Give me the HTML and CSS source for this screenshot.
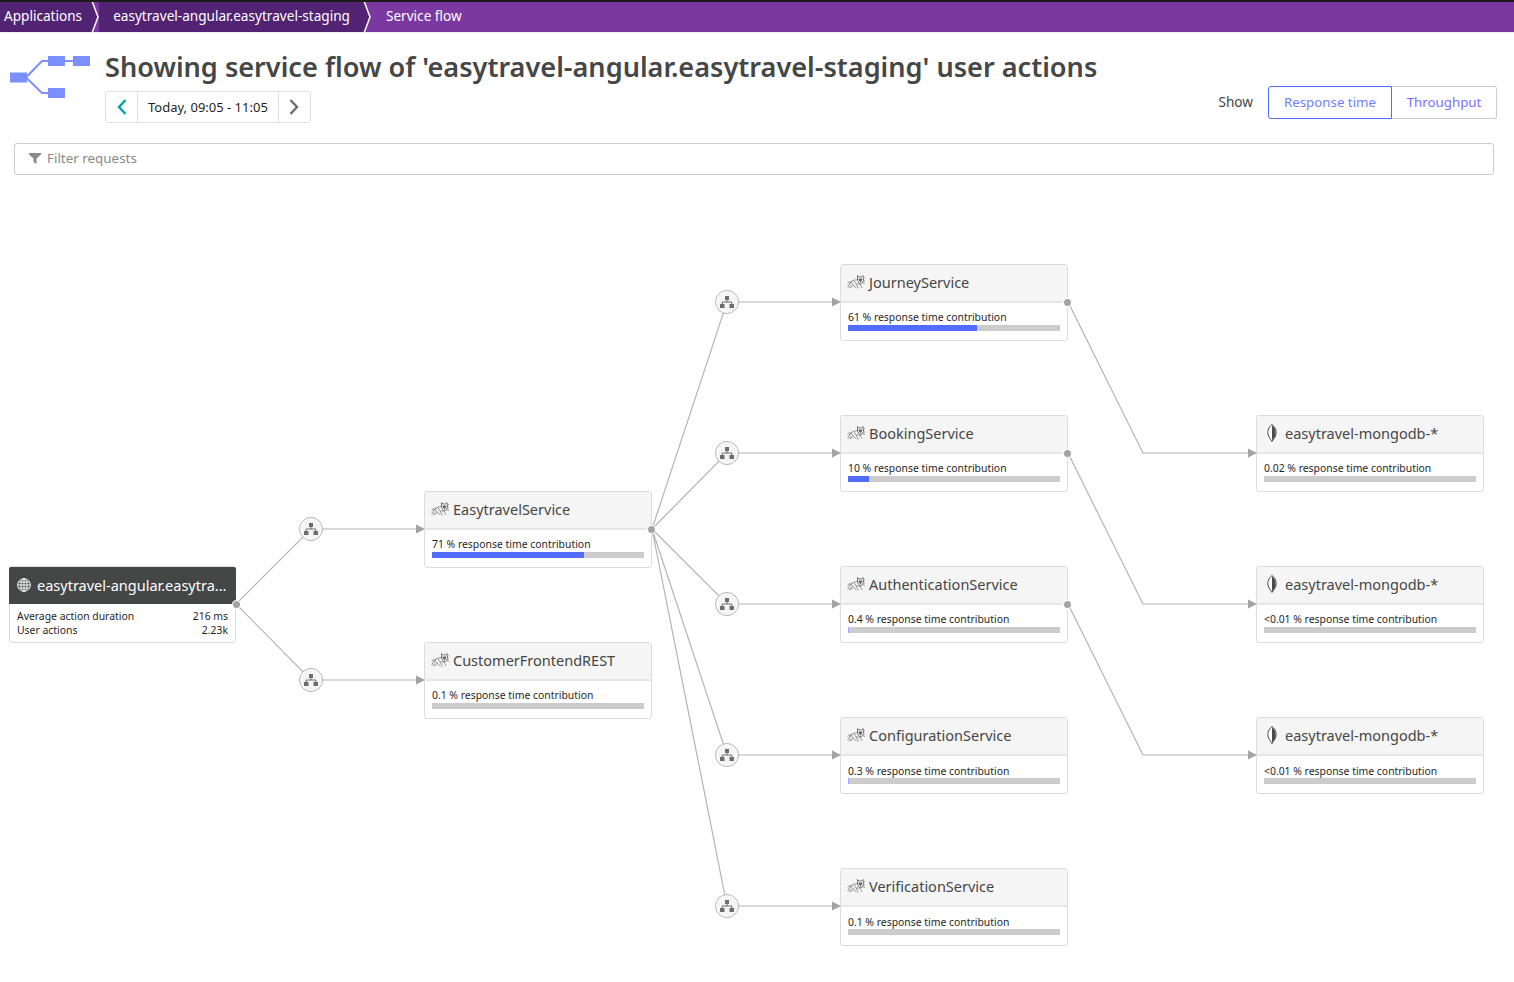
FILE: index.html
```html
<!DOCTYPE html>
<html lang="en">
<head>
  <meta charset="UTF-8">
  <title>Service flow</title>
  <link rel="stylesheet" href="styles.css">
</head>
<body>

<svg class="defs" width="0" height="0">
  <symbol id="cat" viewBox="0 0 18 14">
    <g fill="none" stroke="#808080" stroke-width="0.800">
      <path d="M0.500 12 L4 7 Q7 4.500 10.500 4.500 M4 7 L6.500 10.500 L3 13 M1.500 13 L5 9.500 M2 9 L5 5.500 M7 5.500 L9 9 L11.500 13.500 M9 9 L13 9 M13 9 L15 13 M6.500 10.500 L9.500 13 M0.500 8.500 L3 6"/>
      <path d="M15.500 6 H18 M15 7.500 L18 8.500 M16 3.500 L18 2.500"/>
    </g>
    <path d="M10.500 0.500 L12 2 H14.500 L16 0.500 L16.500 5.500 L14.500 8.500 H12.500 L10.500 5.500 Z" fill="#fff" stroke="#666" stroke-width="0.900"/>
    <path d="M11.500 3.500 H15.200 V5 L13.500 7.500 L11.500 5 Z" fill="#666"/>
  </symbol>
  <symbol id="leaf" viewBox="0 0 10 18">
    <path d="M5 0.500 C1.500 3.500 0.500 6.500 1 10 C1.500 13 3.500 15 5 17.500 C6.500 15 8.500 13 9 10 C9.500 6.500 8.500 3.500 5 0.500 Z" fill="#fff" stroke="#4a4a4a" stroke-width="1"/>
    <path d="M5 1 C8 4 8.800 6.500 8.500 10 C8.200 13 6.500 14.500 5 17 Z" fill="#4a4a4a"/>
  </symbol>
  <symbol id="tree" viewBox="0 0 14 12">
    <path d="M5 0 H9 V4 H5 Z M0 8 H4.500 V12 H0 Z M9.500 8 H14 V12 H9.500 Z" fill="#6d6d6d"/>
    <path d="M7 4 V6 M2.200 8 V6 H11.800 V8" fill="none" stroke="#6d6d6d" stroke-width="1"/>
  </symbol>
</svg>

<!-- Breadcrumbs -->
<nav class="topbar">
  <a class="crumb crumb-first">Applications</a>
  <svg class="crumb-sep" width="14" height="30" viewBox="0 0 14 30"><path d="M0 0 H7 L13 15 L7 30 H0 Z" fill="#522273"/><path d="M7 -1 L13 15 L7 31" fill="none" stroke="#fff" stroke-width="1.500"/></svg>
  <a class="crumb">easytravel-angular.easytravel-staging</a>
  <svg class="crumb-sep" width="14" height="30" viewBox="0 0 14 30"><path d="M0 0 H7 L13 15 L7 30 H0 Z" fill="#522273"/><path d="M7 -1 L13 15 L7 31" fill="none" stroke="#fff" stroke-width="1.500"/></svg>
  <a class="crumb crumb-current">Service flow</a>
</nav>

<!-- Page header -->
<header class="page-header">
  <svg class="page-icon" width="80" height="43" viewBox="0 0 80 43">
    <path d="M16 21.500 L32 5 H70 M16 21.500 L32 37 H40" fill="none" stroke="#7c8fff" stroke-width="2"/>
    <rect x="0" y="16.500" width="17" height="10" fill="#7c8fff"/>
    <rect x="38" y="0" width="17" height="10" fill="#7c8fff"/>
    <rect x="63" y="0" width="17" height="10" fill="#7c8fff"/>
    <rect x="38" y="32" width="17" height="10" fill="#7c8fff"/>
  </svg>
  <div class="page-title">
    <h1>Showing service flow of 'easytravel-angular.easytravel-staging' user actions</h1>
    <div class="timeframe">
      <button class="tf-btn tf-prev"><svg width="10" height="16" viewBox="0 0 10 16"><path d="M8.500 1 L2 8 L8.500 15" fill="none" stroke="#00a1b2" stroke-width="2.400"/></svg></button>
      <span class="tf-label">Today, 09:05 - 11:05</span>
      <button class="tf-btn tf-next"><svg width="10" height="16" viewBox="0 0 10 16"><path d="M1.500 1 L8 8 L1.500 15" fill="none" stroke="#6d6d6d" stroke-width="2.400"/></svg></button>
    </div>
  </div>
  <div class="show-toggle">
    <span class="show-label">Show</span>
    <button class="toggle toggle-on">Response time</button>
    <button class="toggle toggle-off">Throughput</button>
  </div>
</header>

<!-- Filter -->
<div class="filter">
  <svg width="12" height="12" viewBox="0 0 12 12"><path d="M0 1 H12 V2.500 L7.500 6.500 V12 L4.500 10 V6.500 L0 2.500 Z" fill="#898989"/></svg>
  <span>Filter requests</span>
</div>

<!-- Flow diagram -->
<main class="canvas">
  <svg class="edges" width="1514" height="807" viewBox="0 175 1514 807">
    <g fill="none" stroke="#b4b4b4" stroke-width="1.200">
      <path d="M236 604 L311 529 H420"/>
      <path d="M236 604 L311 680 H420"/>
      <path d="M652 529 L727 302 H836"/>
      <path d="M652 529 L727 453 H836"/>
      <path d="M652 529 L727 604 H836"/>
      <path d="M652 529 L727 755 H836"/>
      <path d="M652 529 L727 906 H836"/>
      <path d="M1068 302 L1143 453 H1252"/>
      <path d="M1068 453 L1143 604 H1252"/>
      <path d="M1068 604 L1143 755 H1252"/>
    </g>
    <g fill="#a3a3a3">
      <path d="M416 524.500 L425 529 L416 533.500 Z"/>
      <path d="M416 675.500 L425 680 L416 684.500 Z"/>
      <path d="M832 297.500 L841 302 L832 306.500 Z"/>
      <path d="M832 448.500 L841 453 L832 457.500 Z"/>
      <path d="M832 599.500 L841 604 L832 608.500 Z"/>
      <path d="M832 750.500 L841 755 L832 759.500 Z"/>
      <path d="M832 901.500 L841 906 L832 910.500 Z"/>
      <path d="M1248 448.500 L1257 453 L1248 457.500 Z"/>
      <path d="M1248 599.500 L1257 604 L1248 608.500 Z"/>
      <path d="M1248 750.500 L1257 755 L1248 759.500 Z"/>
    </g>
  </svg>

  <div class="junction j-a1"><svg width="14" height="12"><use href="#tree"/></svg></div>
  <div class="junction j-a2"><svg width="14" height="12"><use href="#tree"/></svg></div>
  <div class="junction j-b1"><svg width="14" height="12"><use href="#tree"/></svg></div>
  <div class="junction j-b2"><svg width="14" height="12"><use href="#tree"/></svg></div>
  <div class="junction j-b3"><svg width="14" height="12"><use href="#tree"/></svg></div>
  <div class="junction j-b4"><svg width="14" height="12"><use href="#tree"/></svg></div>
  <div class="junction j-b5"><svg width="14" height="12"><use href="#tree"/></svg></div>

  <!-- Application -->
  <div class="node node-app col-0">
    <div class="node-header">
      <svg class="globe" width="14" height="14" viewBox="0 0 14 14"><g fill="none" stroke="#fff" stroke-width="1"><circle cx="7" cy="7" r="6.300"/><ellipse cx="7" cy="7" rx="3" ry="6.300"/><path d="M0.700 7 H13.300 M1.500 4 H12.500 M1.500 10 H12.500 M7 0.700 V13.300"/></g></svg>
      <span class="node-name">easytravel-angular.easytra...</span>
    </div>
    <div class="node-body">
      <div class="stat"><span>Average action duration</span><span>216 ms</span></div>
      <div class="stat"><span>User actions</span><span>2.23k</span></div>
    </div>
    <i class="port"></i>
  </div>

  <!-- Services -->
  <div class="node col-1 row-a1">
    <div class="node-header"><svg class="cat" width="18" height="14"><use href="#cat"/></svg><span class="node-name">EasytravelService</span></div>
    <div class="node-body">
      <div class="contrib">71 % response time contribution</div>
      <div class="bar"><div class="bar-fill" style="width: 71.5%"></div></div>
    </div>
    <i class="port"></i>
  </div>
  <div class="node col-1 row-a2">
    <div class="node-header"><svg class="cat" width="18" height="14"><use href="#cat"/></svg><span class="node-name">CustomerFrontendREST</span></div>
    <div class="node-body">
      <div class="contrib">0.1 % response time contribution</div>
      <div class="bar"></div>
    </div>
  </div>

  <div class="node col-2 row-1">
    <div class="node-header"><svg class="cat" width="18" height="14"><use href="#cat"/></svg><span class="node-name">JourneyService</span></div>
    <div class="node-body">
      <div class="contrib">61 % response time contribution</div>
      <div class="bar"><div class="bar-fill" style="width: 61%"></div></div>
    </div>
    <i class="port"></i>
  </div>
  <div class="node col-2 row-2">
    <div class="node-header"><svg class="cat" width="18" height="14"><use href="#cat"/></svg><span class="node-name">BookingService</span></div>
    <div class="node-body">
      <div class="contrib">10 % response time contribution</div>
      <div class="bar"><div class="bar-fill" style="width: 10%"></div></div>
    </div>
    <i class="port"></i>
  </div>
  <div class="node col-2 row-3">
    <div class="node-header"><svg class="cat" width="18" height="14"><use href="#cat"/></svg><span class="node-name">AuthenticationService</span></div>
    <div class="node-body">
      <div class="contrib">0.4 % response time contribution</div>
      <div class="bar"><div class="bar-fill bar-fill-tiny" style="width: 0.5%"></div></div>
    </div>
    <i class="port"></i>
  </div>
  <div class="node col-2 row-4">
    <div class="node-header"><svg class="cat" width="18" height="14"><use href="#cat"/></svg><span class="node-name">ConfigurationService</span></div>
    <div class="node-body">
      <div class="contrib">0.3 % response time contribution</div>
      <div class="bar"><div class="bar-fill bar-fill-tiny" style="width: 0.4%"></div></div>
    </div>
  </div>
  <div class="node col-2 row-5">
    <div class="node-header"><svg class="cat" width="18" height="14"><use href="#cat"/></svg><span class="node-name">VerificationService</span></div>
    <div class="node-body">
      <div class="contrib">0.1 % response time contribution</div>
      <div class="bar"></div>
    </div>
  </div>

  <!-- Databases -->
  <div class="node col-3 row-2">
    <div class="node-header"><svg class="leaf" width="10" height="18"><use href="#leaf"/></svg><span class="node-name">easytravel-mongodb-*</span></div>
    <div class="node-body">
      <div class="contrib">0.02 % response time contribution</div>
      <div class="bar"></div>
    </div>
  </div>
  <div class="node col-3 row-3">
    <div class="node-header"><svg class="leaf" width="10" height="18"><use href="#leaf"/></svg><span class="node-name">easytravel-mongodb-*</span></div>
    <div class="node-body">
      <div class="contrib">&lt;0.01 % response time contribution</div>
      <div class="bar"></div>
    </div>
  </div>
  <div class="node col-3 row-4">
    <div class="node-header"><svg class="leaf" width="10" height="18"><use href="#leaf"/></svg><span class="node-name">easytravel-mongodb-*</span></div>
    <div class="node-body">
      <div class="contrib">&lt;0.01 % response time contribution</div>
      <div class="bar"></div>
    </div>
  </div>
</main>

</body>
</html>
```

FILE: styles.css
```css
/* Global Styles */
* {
  box-sizing: border-box;
}

body {
  margin: 0;
  height: 982px;
  overflow: hidden;
  background-color: #ffffff;
  color: #454646;
  font-family: "Noto Sans", "Open Sans", sans-serif;
  font-size: 14px;
}

.defs {
  position: absolute;
}

/* Breadcrumbs */
.topbar {
  display: flex;
  align-items: stretch;
  height: 33px;
  border-top: 2px solid #1a1a1a;
  border-bottom: 1px solid #f0f0f0;
  background-color: #7c38a1;
  color: #ffffff;
  font-size: 13.600px;
}

.crumb {
  display: flex;
  align-items: center;
  padding: 0 7px 3px 14px;
  background-color: #522273;
  white-space: nowrap;
}

.crumb-first {
  padding: 0 3px 3px 4px;
}

.crumb-current {
  padding-left: 15px;
  background-color: transparent;
}

.crumb-sep {
  flex: none;
  display: block;
}

/* Page header */
.page-header {
  display: flex;
  height: 110px;
  padding: 23px 17px 0 10px;
}

.page-icon {
  flex: none;
  margin-right: 15px;
}

.page-title {
  flex: 1;
}

.page-title h1 {
  margin: -8px 0 0 0;
  font-size: 27.120px;
  font-weight: 600;
  line-height: 38px;
  color: #454646;
  white-space: nowrap;
}

.timeframe {
  display: inline-flex;
  align-items: stretch;
  height: 32px;
  margin-top: 5px;
  border: 1px solid #e0e0e0;
  border-radius: 3px;
}

.tf-btn {
  display: flex;
  align-items: center;
  justify-content: center;
  width: 32px;
  padding: 0;
  border: none;
  background: transparent;
}

.tf-prev {
  border-right: 1px solid #e0e0e0;
}

.tf-next {
  border-left: 1px solid #e0e0e0;
}

.tf-label {
  display: flex;
  align-items: center;
  padding: 0 10px;
  font-size: 13px;
  color: #1f1f1f;
}

.show-toggle {
  display: flex;
  align-items: center;
  height: 33px;
  margin-top: 30px;
}

.show-label {
  margin-right: 15px;
  padding-bottom: 2px;
  font-size: 13.600px;
}

.toggle {
  height: 33px;
  padding: 0 0 2px 0;
  background: #ffffff;
  color: #6f7fff;
  font-family: inherit;
  font-size: 13.300px;
}

.toggle-on {
  width: 124px;
  border: 1px solid #526cff;
  border-radius: 3px 0 0 3px;
}

.toggle-off {
  width: 105px;
  border: 1px solid #cccccc;
  border-left: none;
  border-radius: 0 3px 3px 0;
  color: #7a70ff;
}

/* Filter */
.filter {
  display: flex;
  align-items: center;
  gap: 6px;
  height: 32px;
  margin: 0 20px 0 14px;
  padding: 0 0 2px 14px;
  border: 1px solid #cccccc;
  border-radius: 3px;
  color: #898989;
  font-size: 13.400px;
}

/* Diagram */
.canvas {
  position: relative;
  height: 807px;
}

.edges {
  position: absolute;
  left: 0;
  top: 0;
}

.junction {
  position: absolute;
  display: flex;
  align-items: center;
  justify-content: center;
  width: 24px;
  height: 24px;
  border: 1px solid #b4b4b4;
  border-radius: 50%;
  background-color: #f5f5f5;
  box-shadow: inset 0 0 0 1px #ffffff;
}

.j-a1 { left: 299px; top: 342px; }
.j-a2 { left: 299px; top: 493px; }
.j-b1 { left: 715px; top: 115px; }
.j-b2 { left: 715px; top: 266px; }
.j-b3 { left: 715px; top: 417px; }
.j-b4 { left: 715px; top: 568px; }
.j-b5 { left: 715px; top: 719px; }

/* Nodes */
.node {
  position: absolute;
  width: 228px;
  height: 77px;
  border: 1px solid #dcdcdc;
  border-radius: 3px;
  background-color: #ffffff;
}

.col-0 { left: 9px; }
.col-1 { left: 424px; }
.col-2 { left: 840px; }
.col-3 { left: 1256px; }

.row-1 { top: 89px; }
.row-2 { top: 240px; }
.row-3 { top: 391px; }
.row-4 { top: 542px; }
.row-5 { top: 693px; height: 78px; }
.row-a1 { top: 316px; }
.row-a2 { top: 467px; }
.node-app { top: 391px; width: 227px; }

.node-header {
  display: flex;
  align-items: center;
  height: 38px;
  padding-left: 6px;
  padding-bottom: 3px;
  border-bottom: 2px solid #e6e6e6;
  border-radius: 2px 2px 0 0;
  background-color: #f5f5f5;
}

.node-name {
  font-size: 14.500px;
  white-space: nowrap;
  color: #454646;
}

.cat {
  flex: none;
  margin-right: 4px;
}

.leaf {
  flex: none;
  margin: 0 8px 0 4px;
}

.globe {
  flex: none;
  margin-right: 6px;
}

.node-body {
  padding: 7px 7px 0 7px;
  color: #1f1f1f;
}

.contrib {
  height: 15px;
  font-size: 10.400px;
  line-height: 15px;
  white-space: nowrap;
}

.row-4 .contrib,
.row-5 .contrib {
  line-height: 17px;
}

.bar {
  height: 6px;
  background-color: #cccccc;
}

.bar-fill {
  height: 100%;
  background-color: #526cff;
}

.bar-fill-tiny {
  background-color: #9aa8ff;
}

/* Application node */
.node-app .node-header {
  height: 37px;
  margin: 0 -1px;
  padding-left: 8px;
  padding-bottom: 2px;
  background-color: #454646;
  border-bottom: none;
}

.node-app .node-name {
  color: #ffffff;
}

.node-app .node-body {
  padding-top: 5px;
}

.node-app .port {
  right: -5px;
}

.stat {
  display: flex;
  justify-content: space-between;
  height: 14px;
  font-size: 10.400px;
  line-height: 14px;
}

/* Connection dot on the right edge */
.port {
  position: absolute;
  right: -4px;
  top: 34px;
  width: 7px;
  height: 7px;
  border-radius: 50%;
  background-color: #a3a3a3;
  box-shadow: 0 0 0 1px #ffffff;
}
```
